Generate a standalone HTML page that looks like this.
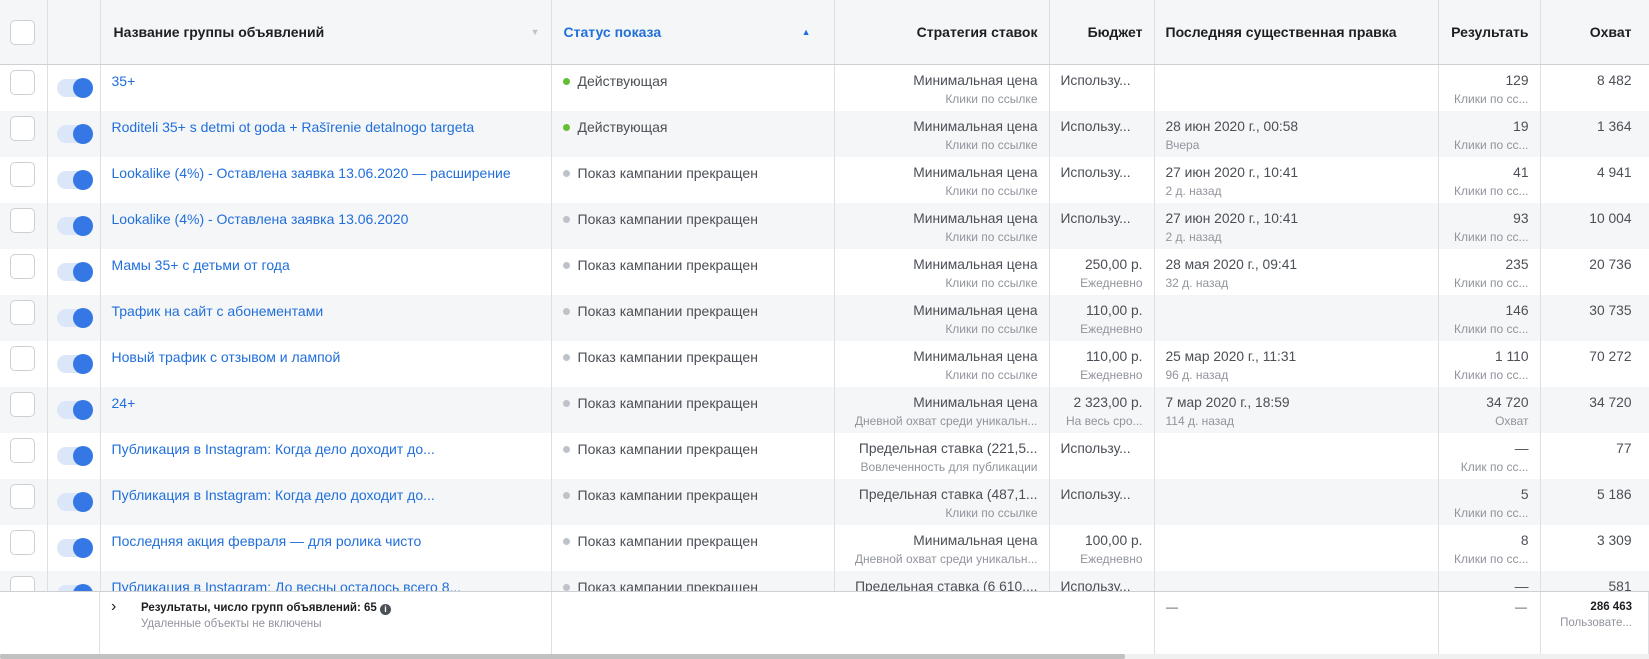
<!DOCTYPE html>
<html><head><meta charset="utf-8"><style>
*{box-sizing:border-box;margin:0;padding:0}
body{width:1649px;height:659px;overflow:hidden;background:#fff;font-family:"Liberation Sans",Arial,sans-serif;color:#1c1e21;position:relative}
.wrap{position:absolute;left:0;top:0;width:1649px;height:592px;overflow:hidden}
table{border-collapse:collapse;table-layout:fixed;width:1649px}
td,th{border-right:1px solid #dddfe2;vertical-align:top;font-size:13.8px;line-height:16px;padding:8px 11px 0 11px;white-space:nowrap;overflow:hidden;text-align:left}
td.n,td.st{font-size:14px}
th{height:64px;background:#f5f6f7;border-bottom:1px solid #ced0d4;font-weight:bold;vertical-align:middle;padding-top:0;font-size:14px}
tr.r td{height:46px}
tr.r:nth-child(even) td{background:#f5f6f7}
.r td{color:#4b4f56}
.n a{color:#216fdb;text-decoration:none}
.s{font-size:12px;color:#90949c;line-height:14px;margin-top:3px}
td.rt,th.rt{text-align:right}
.cb{width:25px;height:25px;border:1px solid #ccd0d5;border-radius:5px;background:#fff;margin-top:-3px;margin-left:-1px}
th .cb{margin-top:2px}
.tg{position:relative;width:36px;height:20px;margin-top:5px;margin-left:-2px}
.tg:before{content:"";position:absolute;left:0;top:1px;width:34px;height:18px;border-radius:9px;background:#dbe7f9}
.tg:after{content:"";position:absolute;left:16px;top:0;width:20px;height:20px;border-radius:50%;background:#3578e5}
.dot{display:inline-block;width:7px;height:7px;border-radius:50%;background:#bec2c9;margin-right:8px;vertical-align:1px}
.g{background:#63be31}
.foot{position:absolute;left:0;top:591px;width:1649px;height:62px;border-top:1px solid #ced0d4;background:#fff}
.foot div.v{position:absolute;top:0;height:62px;border-left:1px solid #dddfe2}
.sb{position:absolute;left:0;top:654px;width:1649px;height:5px;background:#f0f0f0}
.sb i{position:absolute;left:0;top:0;width:1125px;height:5px;background:#c1c1c1;border-radius:2px}
</style></head><body>
<div class="wrap"><table>
<colgroup><col style="width:47px"><col style="width:53px"><col style="width:451px"><col style="width:283px"><col style="width:215px"><col style="width:105px"><col style="width:284px"><col style="width:102px"><col style="width:109px"></colgroup>
<tr><th><div class="cb"></div></th><th></th>
<th style="padding-left:13px">Название группы объявлений<span style="float:right;color:#bec2c9;font-size:9px">▼</span></th>
<th style="color:#216fdb;padding-left:12px">Статус показа<span style="float:right;color:#216fdb;font-size:9px;margin-right:12px">▲</span></th>
<th class="rt">Стратегия ставок</th><th class="rt">Бюджет</th><th>Последняя существенная правка</th><th class="rt">Результать</th><th class="rt" style="padding-right:17px">Охват</th></tr>
</table>
<table id="b">
<colgroup><col style="width:47px"><col style="width:53px"><col style="width:451px"><col style="width:283px"><col style="width:215px"><col style="width:105px"><col style="width:284px"><col style="width:102px"><col style="width:109px"></colgroup>
<tbody>
<tr class="r"><td><div class="cb"></div></td><td><div class="tg"></div></td><td class="n"><a>35+</a></td><td class="st"><span class="dot g"></span>Действующая</td><td class="rt">Минимальная цена<div class="s">Клики по ссылке</div></td><td>Использу...</td><td></td><td class="rt">129<div class="s">Клики по сс...</div></td><td class="rt" style="padding-right:17px">8 482</td></tr>
<tr class="r"><td><div class="cb"></div></td><td><div class="tg"></div></td><td class="n"><a>Roditeli 35+ s detmi ot goda + Rašīrenie detalnogo targeta</a></td><td class="st"><span class="dot g"></span>Действующая</td><td class="rt">Минимальная цена<div class="s">Клики по ссылке</div></td><td>Использу...</td><td>28 июн 2020 г., 00:58<div class="s">Вчера</div></td><td class="rt">19<div class="s">Клики по сс...</div></td><td class="rt" style="padding-right:17px">1 364</td></tr>
<tr class="r"><td><div class="cb"></div></td><td><div class="tg"></div></td><td class="n"><a>Lookalike (4%) - Оставлена заявка 13.06.2020 — расширение</a></td><td class="st"><span class="dot"></span>Показ кампании прекращен</td><td class="rt">Минимальная цена<div class="s">Клики по ссылке</div></td><td>Использу...</td><td>27 июн 2020 г., 10:41<div class="s">2 д. назад</div></td><td class="rt">41<div class="s">Клики по сс...</div></td><td class="rt" style="padding-right:17px">4 941</td></tr>
<tr class="r"><td><div class="cb"></div></td><td><div class="tg"></div></td><td class="n"><a>Lookalike (4%) - Оставлена заявка 13.06.2020</a></td><td class="st"><span class="dot"></span>Показ кампании прекращен</td><td class="rt">Минимальная цена<div class="s">Клики по ссылке</div></td><td>Использу...</td><td>27 июн 2020 г., 10:41<div class="s">2 д. назад</div></td><td class="rt">93<div class="s">Клики по сс...</div></td><td class="rt" style="padding-right:17px">10 004</td></tr>
<tr class="r"><td><div class="cb"></div></td><td><div class="tg"></div></td><td class="n"><a>Мамы 35+ с детьми от года</a></td><td class="st"><span class="dot"></span>Показ кампании прекращен</td><td class="rt">Минимальная цена<div class="s">Клики по ссылке</div></td><td class="rt">250,00 р.<div class="s">Ежедневно</div></td><td>28 мая 2020 г., 09:41<div class="s">32 д. назад</div></td><td class="rt">235<div class="s">Клики по сс...</div></td><td class="rt" style="padding-right:17px">20 736</td></tr>
<tr class="r"><td><div class="cb"></div></td><td><div class="tg"></div></td><td class="n"><a>Трафик на сайт с абонементами</a></td><td class="st"><span class="dot"></span>Показ кампании прекращен</td><td class="rt">Минимальная цена<div class="s">Клики по ссылке</div></td><td class="rt">110,00 р.<div class="s">Ежедневно</div></td><td></td><td class="rt">146<div class="s">Клики по сс...</div></td><td class="rt" style="padding-right:17px">30 735</td></tr>
<tr class="r"><td><div class="cb"></div></td><td><div class="tg"></div></td><td class="n"><a>Новый трафик с отзывом и лампой</a></td><td class="st"><span class="dot"></span>Показ кампании прекращен</td><td class="rt">Минимальная цена<div class="s">Клики по ссылке</div></td><td class="rt">110,00 р.<div class="s">Ежедневно</div></td><td>25 мар 2020 г., 11:31<div class="s">96 д. назад</div></td><td class="rt">1 110<div class="s">Клики по сс...</div></td><td class="rt" style="padding-right:17px">70 272</td></tr>
<tr class="r"><td><div class="cb"></div></td><td><div class="tg"></div></td><td class="n"><a>24+</a></td><td class="st"><span class="dot"></span>Показ кампании прекращен</td><td class="rt">Минимальная цена<div class="s">Дневной охват среди уникальн...</div></td><td class="rt">2 323,00 р.<div class="s">На весь сро...</div></td><td>7 мар 2020 г., 18:59<div class="s">114 д. назад</div></td><td class="rt">34 720<div class="s">Охват</div></td><td class="rt" style="padding-right:17px">34 720</td></tr>
<tr class="r"><td><div class="cb"></div></td><td><div class="tg"></div></td><td class="n"><a>Публикация в Instagram: Когда дело доходит до...</a></td><td class="st"><span class="dot"></span>Показ кампании прекращен</td><td class="rt">Предельная ставка (221,5...<div class="s">Вовлеченность для публикации</div></td><td>Использу...</td><td></td><td class="rt">—<div class="s">Клик по сс...</div></td><td class="rt" style="padding-right:17px">77</td></tr>
<tr class="r"><td><div class="cb"></div></td><td><div class="tg"></div></td><td class="n"><a>Публикация в Instagram: Когда дело доходит до...</a></td><td class="st"><span class="dot"></span>Показ кампании прекращен</td><td class="rt">Предельная ставка (487,1...<div class="s">Клики по ссылке</div></td><td>Использу...</td><td></td><td class="rt">5<div class="s">Клики по сс...</div></td><td class="rt" style="padding-right:17px">5 186</td></tr>
<tr class="r"><td><div class="cb"></div></td><td><div class="tg"></div></td><td class="n"><a>Последняя акция февраля — для ролика чисто</a></td><td class="st"><span class="dot"></span>Показ кампании прекращен</td><td class="rt">Минимальная цена<div class="s">Дневной охват среди уникальн...</div></td><td class="rt">100,00 р.<div class="s">Ежедневно</div></td><td></td><td class="rt">8<div class="s">Клики по сс...</div></td><td class="rt" style="padding-right:17px">3 309</td></tr>
<tr class="r"><td><div class="cb"></div></td><td><div class="tg"></div></td><td class="n"><a>Публикация в Instagram: До весны осталось всего 8...</a></td><td class="st"><span class="dot"></span>Показ кампании прекращен</td><td class="rt">Предельная ставка (6 610,...<div class="s">Клики по ссылке</div></td><td>Использу...</td><td></td><td class="rt">—</td><td class="rt" style="padding-right:17px">581</td></tr>
</tbody></table></div>
<div class="foot">
<div class="v" style="left:99px"></div><div class="v" style="left:551px"></div><div class="v" style="left:1154px"></div><div class="v" style="left:1438px"></div><div class="v" style="left:1540px"></div><div class="v" style="left:1648px"></div>
<div style="position:absolute;left:111px;top:6px;font-size:16px;color:#1c1e21">›</div>
<div style="position:absolute;left:141px;top:10px;font-size:11.5px;font-weight:bold;color:#1c1e21">Результаты, число групп объявлений: 65 <span style="display:inline-block;width:11px;height:11px;border-radius:50%;background:#4b4f56;color:#fff;font-size:9px;line-height:11px;text-align:center;vertical-align:-1px">i</span></div>
<div style="position:absolute;left:141px;top:26px;font-size:11.5px;color:#90949c">Удаленные объекты не включены</div>
<div style="position:absolute;left:1166px;top:8px;font-size:12px;color:#4b4f56">—</div>
<div style="position:absolute;right:122px;top:8px;font-size:12px;color:#4b4f56">—</div>
<div style="position:absolute;right:17px;top:9px;font-size:11.5px;font-weight:bold">286 463</div>
<div style="position:absolute;right:17px;top:25px;font-size:11.5px;color:#90949c">Пользовате...</div>
</div>
<div class="sb"><i></i></div>
</body></html>
